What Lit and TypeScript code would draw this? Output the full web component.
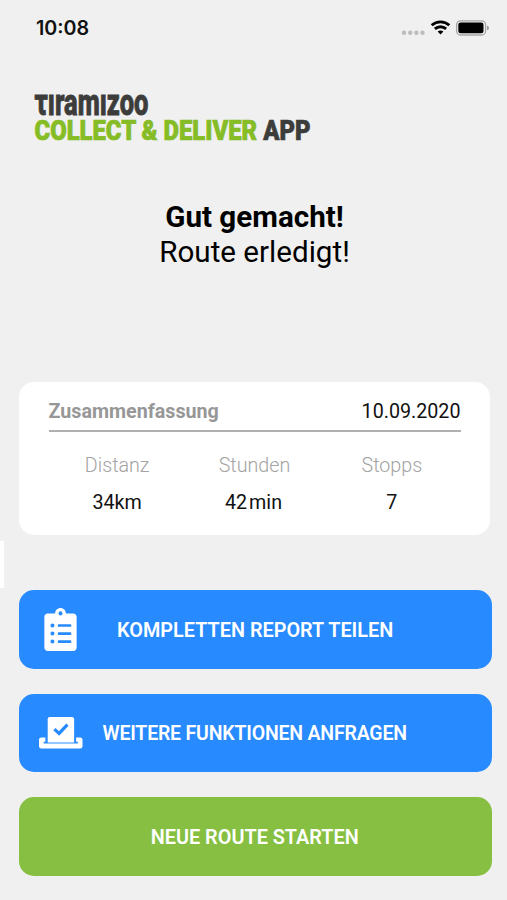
import { LitElement, html, css } from "lit";
import { customElement } from "lit/decorators.js";

const clipboardIcon = html`<svg class="clipboard" viewBox="0 0 384 512" fill="#fff">
  <path
    fill-rule="evenodd"
    d="M344 64h-88c0-35.3-28.7-64-64-64s-64 28.7-64 64H40C18 64 0 82 0 104v368c0 22 18 40 40 40h304c22 0 40-18 40-40V104c0-22-18-40-40-40zM96 424a24 24 0 1 1 0-48 24 24 0 0 1 0 48zm0-96a24 24 0 1 1 0-48 24 24 0 0 1 0 48zm0-96a24 24 0 1 1 0-48 24 24 0 0 1 0 48zM192 40a24 24 0 1 1 0 48 24 24 0 0 1 0-48zm128 368c0 4.400-3.600 8-8 8H168c-4.400 0-8-3.600-8-8v-16c0-4.400 3.600-8 8-8h144c4.400 0 8 3.600 8 8zm0-96c0 4.400-3.600 8-8 8H168c-4.400 0-8-3.600-8-8v-16c0-4.400 3.600-8 8-8h144c4.400 0 8 3.600 8 8zm0-96c0 4.400-3.600 8-8 8H168c-4.400 0-8-3.600-8-8v-16c0-4.400 3.600-8 8-8h144c4.400 0 8 3.600 8 8z"
  />
</svg>`;

const ballotIcon = html`<svg class="ballot" viewBox="0 0 130 94" fill="#fff">
  <path d="M32 0h66q7 0 7 7v69H26V7q0-7 6-7z" />
  <path d="M7 61h12v13h-5v5h102v-5h-5V61h12q7 0 7 7v19q0 7-7 7H7q-7 0-7-7V68q0-7 7-7z" />
  <path d="M46 36l14 13 25-26" fill="none" stroke="#278aff" stroke-width="9.500" />
</svg>`;

@customElement("app-root")
export class AppRoot extends LitElement {
  static styles = css`
    :host {
      display: flex;
      flex-direction: column;
      box-sizing: border-box;
      position: relative;
      width: 507px;
      height: 900px;
      overflow: hidden;
      background: #f0f0f0;
      color: #111;
      font-family: Roboto, sans-serif;
    }
    svg {
      display: block;
      flex: none;
    }
    .status {
      display: flex;
      align-items: center;
      justify-content: space-between;
      height: 56px;
      padding: 0 17px 0 36px;
    }
    .time {
      font: 600 19.700px/57px Inter, sans-serif;
    }
    .logo {
      margin: 26px 0 0 30px;
      overflow: visible;
    }
    .headline {
      margin-top: 52px;
      height: 182px;
      padding-left: 2px;
      text-align: center;
      font-size: 29.600px;
      line-height: 34.500px;
      color: #000;
    }
    .headline div {
      white-space: nowrap;
    }
    .strong {
      font-weight: 700;
    }
    .card {
      box-sizing: border-box;
      flex: none;
      width: 471px;
      height: 153px;
      margin-left: 19px;
      padding: 12px 29.500px 0;
      border-radius: 15px;
      background: #fff;
    }
    .card-head {
      display: flex;
      justify-content: space-between;
      height: 36px;
      line-height: 36px;
      font-size: 19.700px;
      border-bottom: 2px solid #b0b0b0;
    }
    .card-title {
      font-weight: 700;
      color: #979797;
    }
    .stats {
      display: grid;
      grid-template-columns: repeat(3, 1fr);
      margin-top: 15px;
      text-align: center;
      font-size: 19.700px;
      line-height: 37px;
    }
    .label {
      font-weight: 300;
      color: #a3a3a3;
    }
    .minutes {
      padding-right: 2px;
    }
    .actions {
      display: flex;
      flex-direction: column;
      gap: 25px;
      margin: 55px 0 0 19px;
    }
    .button {
      box-sizing: border-box;
      display: flex;
      align-items: center;
      width: 472.500px;
      height: 78.600px;
      border-radius: 15px;
      background: #278aff;
      color: #fff;
      font-size: 19.850px;
      font-weight: 600;
      white-space: nowrap;
    }
    .button span {
      padding-top: 1.500px;
    }
    .report {
      padding-left: 25px;
      gap: 40px;
    }
    .request {
      padding-left: 20px;
      gap: 20px;
      font-size: 19.500px;
      letter-spacing: -0.200px;
    }
    .start {
      justify-content: center;
      padding-right: 1px;
      background: #86bf41;
    }
    .clipboard {
      width: 33px;
      height: 43px;
    }
    .ballot {
      width: 43.500px;
      height: 31.500px;
    }
    .edge {
      position: absolute;
      left: 0;
      top: 541px;
      width: 4px;
      height: 47px;
      background: #fff;
    }
  `;

  render() {
    return html`
      <div class="status">
        <span class="time">10:08</span>
        <svg width="90" height="20" viewBox="0 0 90 20">
          <g fill="#bdbdbd">
            <circle cx="4" cy="14.800" r="2.200" />
            <circle cx="10.200" cy="14.800" r="2.200" />
            <circle cx="16.400" cy="14.800" r="2.200" />
            <circle cx="22.500" cy="14.800" r="2.200" />
          </g>
          <g fill="none" stroke="#000" stroke-width="2.900">
            <path d="M31.700 7.300a13 13 0 0 1 17.600 0" />
            <path d="M34.900 10.900a8.200 8.200 0 0 1 11.200 0" />
          </g>
          <path d="M37.600 13.600a4.500 4.500 0 0 1 5.800 0l-2.900 3z" fill="#000" />
          <rect x="56.600" y="2.800" width="29" height="14.200" rx="4" fill="#eee" stroke="#a6a6a6" stroke-width="1.300" />
          <rect x="58.300" y="4.500" width="25.200" height="10.800" rx="2.300" fill="#000" />
          <path d="M87 7.500q2 .6 2 2.400t-2 2.400z" fill="#999" />
        </svg>
      </div>
      <svg class="logo" width="290" height="66" viewBox="0 -10 290 66" font-family="Roboto, sans-serif">
        <text x="4.500" y="23.300" font-size="36" font-weight="800" fill="#3c3c3b" stroke="#3c3c3b" stroke-width="0.900" textLength="114" lengthAdjust="spacingAndGlyphs">τıramızoo</text>
        <text x="4.500" y="48" font-size="27" font-weight="900" fill="#86bc25" stroke="#86bc25" stroke-width="0.700" textLength="276" lengthAdjust="spacingAndGlyphs">COLLECT &amp; DELIVER <tspan fill="#3c3c3b" stroke="#3c3c3b">APP</tspan></text>
      </svg>
      <div class="headline">
        <div class="strong">Gut gemacht!</div>
        <div>Route erledigt!</div>
      </div>
      <div class="card">
        <div class="card-head">
          <span class="card-title">Zusammenfassung</span>
          <span>10.09.2020</span>
        </div>
        <div class="stats">
          <span class="label">Distanz</span>
          <span class="label">Stunden</span>
          <span class="label">Stopps</span>
          <span>34km</span>
          <span class="minutes">42&#8202;min</span>
          <span>7</span>
        </div>
      </div>
      <div class="actions">
        <div class="button report">${clipboardIcon}<span>KOMPLETTEN REPORT TEILEN</span></div>
        <div class="button request">${ballotIcon}<span>WEITERE FUNKTIONEN ANFRAGEN</span></div>
        <div class="button start"><span>NEUE ROUTE STARTEN</span></div>
      </div>
      <div class="edge"></div>
    `;
  }
}
